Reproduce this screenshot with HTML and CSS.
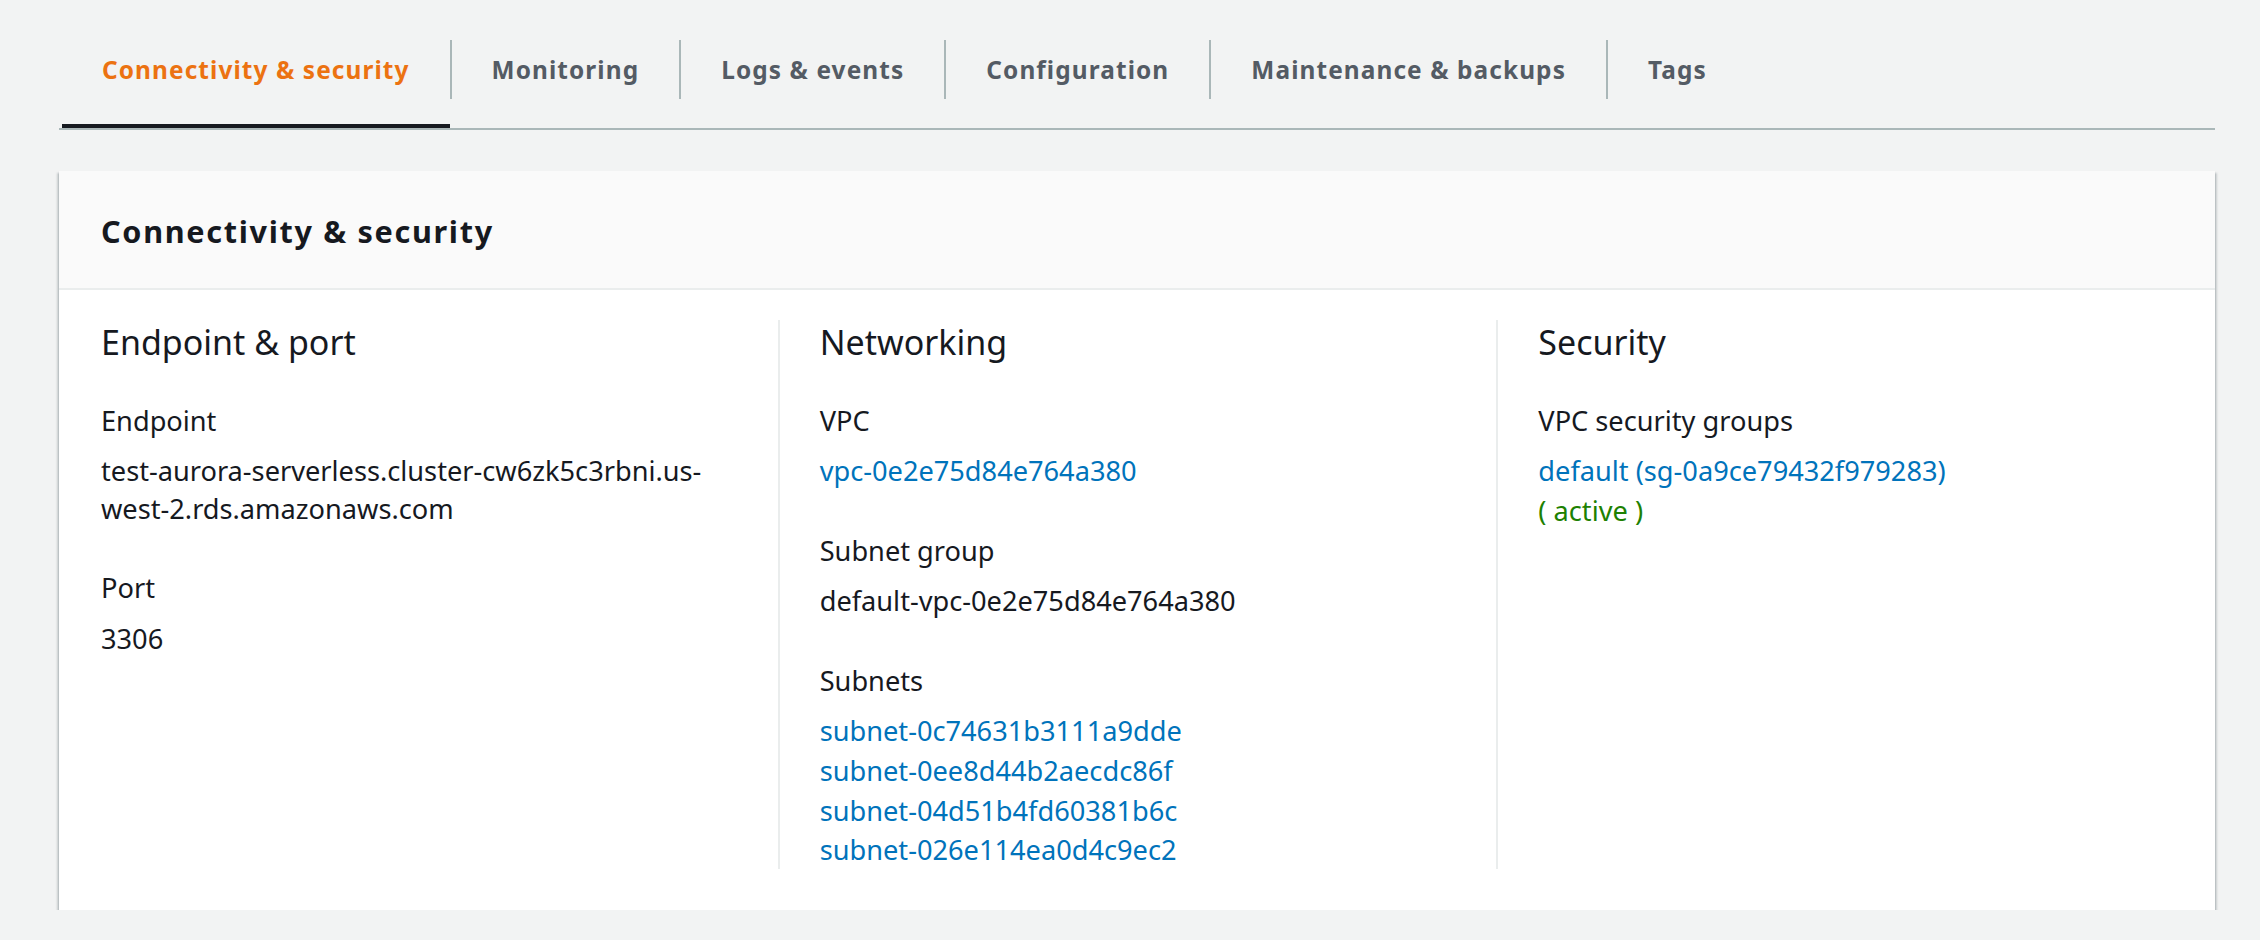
FILE: index.html
```html
<!DOCTYPE html>
<html lang="en">
<head>
<meta charset="utf-8">
<title>Connectivity &amp; security</title>
<link rel="stylesheet" href="styles.css">
</head>
<body>
<div class="page">
  <nav class="tabs">
    <div class="tab active"><span class="tab-label">Connectivity &amp; security</span></div>
    <div class="tab"><span class="tab-label">Monitoring</span></div>
    <div class="tab"><span class="tab-label">Logs &amp; events</span></div>
    <div class="tab"><span class="tab-label">Configuration</span></div>
    <div class="tab"><span class="tab-label">Maintenance &amp; backups</span></div>
    <div class="tab"><span class="tab-label">Tags</span></div>
  </nav>

  <section class="card">
    <header class="card-header">
      <h2 class="card-title">Connectivity &amp; security</h2>
    </header>
    <div class="card-body">
      <div class="col">
        <h3 class="col-title">Endpoint &amp; port</h3>
        <div class="kv">
          <div class="kv-label">Endpoint</div>
          <div class="kv-value">test-aurora-serverless.cluster-cw6zk5c3rbni.us-west-2.rds.amazonaws.com</div>
        </div>
        <div class="kv">
          <div class="kv-label">Port</div>
          <div class="kv-value">3306</div>
        </div>
      </div>
      <div class="col">
        <h3 class="col-title">Networking</h3>
        <div class="kv">
          <div class="kv-label">VPC</div>
          <div class="kv-value"><a class="link" href="#">vpc-0e2e75d84e764a380</a></div>
        </div>
        <div class="kv">
          <div class="kv-label">Subnet group</div>
          <div class="kv-value">default-vpc-0e2e75d84e764a380</div>
        </div>
        <div class="kv">
          <div class="kv-label">Subnets</div>
          <ul class="kv-list">
            <li><a class="link" href="#">subnet-0c74631b3111a9dde</a></li>
            <li><a class="link" href="#">subnet-0ee8d44b2aecdc86f</a></li>
            <li><a class="link" href="#">subnet-04d51b4fd60381b6c</a></li>
            <li><a class="link" href="#">subnet-026e114ea0d4c9ec2</a></li>
          </ul>
        </div>
      </div>
      <div class="col">
        <h3 class="col-title">Security</h3>
        <div class="kv">
          <div class="kv-label">VPC security groups</div>
          <ul class="kv-list">
            <li><a class="link" href="#">default (sg-0a9ce79432f979283)</a></li>
            <li class="status-ok">( active )</li>
          </ul>
        </div>
      </div>
    </div>
  </section>
</div>
</body>
</html>
```

FILE: styles.css
```css
* { box-sizing: border-box; }

html, body {
  margin: 0;
  padding: 0;
  background: #f2f3f3;
}

body {
  font-family: "Noto Sans", "Open Sans", "Liberation Sans", sans-serif;
  color: #16191f;
  font-size: 27.2px;
  line-height: 37.4px;
}

.page {
  margin: 0 45px 0 59px;
}

/* Tabs */
.tabs {
  display: flex;
  border-bottom: 2px solid #aab7b8;
  padding-left: 3px;
}

.tab {
  padding-top: 40px;
  padding-bottom: 25px;
  border-bottom: 4px solid transparent;
}

.tab.active {
  border-bottom-color: #16191f;
}

.tab-label {
  display: block;
  padding: 0 40px;
  line-height: 59px;
  font-size: 24.4px;
  font-weight: 700;
  letter-spacing: 0.045em;
  color: #545b64;
  border-left: 2px solid #aab7b8;
}

.tab:first-child .tab-label {
  border-left: none;
}

.tab.active .tab-label {
  color: #ec7211;
}

/* Card */
.card {
  margin-top: 41px;
  background: #ffffff;
  box-shadow: 0 2px 2px 0 rgba(0, 28, 36, 0.3), 2px 2px 2px 0 rgba(0, 28, 36, 0.15), -2px 2px 2px 0 rgba(0, 28, 36, 0.15);
}

.card-header {
  background: #fafafa;
  border-bottom: 2px solid #eaeded;
  padding: 42px 42px 38px;
}

.card-title {
  margin: 0;
  font-size: 30.6px;
  line-height: 37px;
  font-weight: 700;
  letter-spacing: 0.055em;
}

.card-body {
  display: grid;
  grid-template-columns: repeat(3, 1fr);
  padding: 30px 0 41px;
}

.col {
  padding: 0 42px;
  min-width: 0;
}

.col + .col {
  border-left: 2px solid #eaeded;
  padding-left: 40px;
}

.col-title {
  margin: 0 0 38px;
  font-size: 34px;
  line-height: 44px;
  font-weight: 400;
}

.kv + .kv {
  margin-top: 42px;
}

.kv-label {
  margin-bottom: 13px;
}

.kv-list {
  list-style: none;
  margin: 0;
  padding: 0;
}

.kv-list li + li {
  margin-top: 2.4px;
}

.link {
  color: #0073bb;
  text-decoration: none;
}

.status-ok {
  color: #1d8102;
}
```
